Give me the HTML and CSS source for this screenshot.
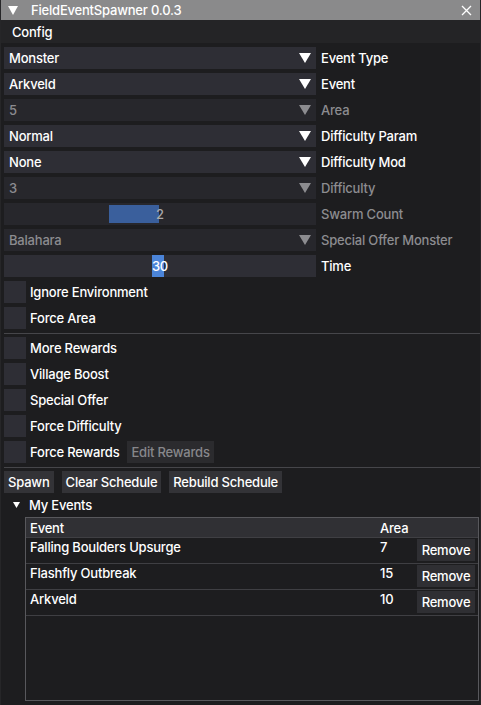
FILE: index.html
```html
<!DOCTYPE html>
<html lang="en">
<head>
  <meta charset="UTF-8">
  <title>FieldEventSpawner</title>
  <link rel="stylesheet" href="styles.css">
</head>
<body>
  <div class="window">
    <div class="titlebar">
      <svg class="collapse" width="10" height="9" viewBox="0 0 10 9"><path d="M0 0H10L5 9Z" fill="#fff"/></svg>
      <span class="title">FieldEventSpawner 0.0.3</span>
      <svg class="close" width="11" height="11" viewBox="0 0 11 11"><path d="M1 1L10 10M10 1L1 10" stroke="#fff" stroke-width="1.3"/></svg>
    </div>
    <div class="menubar"><span>Config</span></div>

    <div class="content">
      <div class="row">
        <div class="frame combo"><span>Monster</span><i class="arrow"></i></div>
        <span class="label">Event Type</span>
      </div>
      <div class="row">
        <div class="frame combo"><span>Arkveld</span><i class="arrow"></i></div>
        <span class="label">Event</span>
      </div>
      <div class="row disabled">
        <div class="frame combo"><span>5</span><i class="arrow"></i></div>
        <span class="label">Area</span>
      </div>
      <div class="row">
        <div class="frame combo"><span>Normal</span><i class="arrow"></i></div>
        <span class="label">Difficulty Param</span>
      </div>
      <div class="row">
        <div class="frame combo"><span>None</span><i class="arrow"></i></div>
        <span class="label">Difficulty Mod</span>
      </div>
      <div class="row disabled">
        <div class="frame combo"><span>3</span><i class="arrow"></i></div>
        <span class="label">Difficulty</span>
      </div>
      <div class="row disabled">
        <div class="frame slider">
          <div class="grab grab-wide"></div>
          <span class="value">2</span>
        </div>
        <span class="label">Swarm Count</span>
      </div>
      <div class="row disabled">
        <div class="frame combo"><span>Balahara</span><i class="arrow"></i></div>
        <span class="label">Special Offer Monster</span>
      </div>
      <div class="row">
        <div class="frame slider">
          <div class="grab grab-time"></div>
          <span class="value">30</span>
        </div>
        <span class="label">Time</span>
      </div>

      <div class="check"><div class="box"></div><span>Ignore Environment</span></div>
      <div class="check"><div class="box"></div><span>Force Area</span></div>

      <div class="separator"></div>

      <div class="check"><div class="box"></div><span>More Rewards</span></div>
      <div class="check"><div class="box"></div><span>Village Boost</span></div>
      <div class="check"><div class="box"></div><span>Special Offer</span></div>
      <div class="check"><div class="box"></div><span>Force Difficulty</span></div>
      <div class="check">
        <div class="box"></div><span>Force Rewards</span>
        <button class="btn btn-disabled">Edit Rewards</button>
      </div>

      <div class="separator"></div>

      <div class="buttons">
        <button class="btn">Spawn</button>
        <button class="btn">Clear Schedule</button>
        <button class="btn">Rebuild Schedule</button>
      </div>

      <div class="tree">
        <svg width="7" height="6" viewBox="0 0 7 6"><path d="M0 0H7L3.5 6Z" fill="#fff"/></svg>
        <span>My Events</span>
      </div>

      <div class="table">
        <div class="trow thead">
          <div class="cell">Event</div>
          <div class="cell">Area</div>
          <div class="cell"></div>
        </div>
        <div class="trow">
          <div class="cell">Falling Boulders Upsurge</div>
          <div class="cell">7</div>
          <div class="cell"><button class="btn remove">Remove</button></div>
        </div>
        <div class="trow">
          <div class="cell">Flashfly Outbreak</div>
          <div class="cell">15</div>
          <div class="cell"><button class="btn remove">Remove</button></div>
        </div>
        <div class="trow">
          <div class="cell">Arkveld</div>
          <div class="cell">10</div>
          <div class="cell"><button class="btn remove">Remove</button></div>
        </div>
      </div>
    </div>
  </div>
</body>
</html>
```

FILE: styles.css
```css
body {
  margin: 0;
  background-color: #1d1d1f;
  font-family: Inter, Roboto, "Noto Sans", sans-serif;
  font-size: 13px;
  font-weight: 500;
  letter-spacing: -0.2px;
  color: #ffffff;
}

.window {
  width: 481px;
  height: 705px;
  box-sizing: border-box;
  border-left: 1px solid #262628;
  border-right: 1px solid #262628;
  overflow: hidden;
}

/* Title bar */
.titlebar {
  height: 20px;
  background-color: #8a8a8b;
  display: flex;
  align-items: center;
  padding: 0 8px 0 7px;
}

.titlebar .title {
  margin-left: 13px;
  flex: 1;
}

.menubar {
  height: 23px;
  background-color: #242426;
  display: flex;
  align-items: center;
  padding-left: 11px;
}

/* Content */
.content {
  display: flex;
  flex-direction: column;
  gap: 4px;
  padding: 4px 0 0 3px;
}

.row {
  display: flex;
  align-items: center;
  height: 22px;
}

.frame {
  width: 312px;
  height: 22px;
  background-color: #2e2e35;
  box-sizing: border-box;
  position: relative;
  display: flex;
  align-items: center;
}

.combo {
  padding-left: 5px;
}

.combo span {
  flex: 1;
}

.arrow {
  width: 0;
  height: 0;
  border-left: 6px solid transparent;
  border-right: 6px solid transparent;
  border-top: 10px solid #ffffff;
  margin-right: 5px;
}

.label {
  margin-left: 5px;
}

.disabled .frame {
  background-color: #27272c;
}

.disabled span,
.disabled .label {
  color: #8c8c90;
}

.disabled .arrow {
  border-top-color: #8c8c90;
}

/* Sliders */
.slider {
  justify-content: center;
}

.grab {
  position: absolute;
  top: 2px;
  bottom: 2px;
  background-color: #4878c8;
}

.grab-wide {
  left: 105px;
  width: 50px;
  background-color: #3a5f9c;
}

.grab-time {
  left: 148px;
  width: 12px;
  top: 0;
  bottom: 0;
  background-color: #4b84d8;
}

.slider .value {
  position: relative;
}

.disabled .slider .value {
  color: #a8a8ac;
}

/* Checkboxes */
.check {
  display: flex;
  align-items: center;
  height: 22px;
}

.check .box {
  width: 22px;
  height: 22px;
  background-color: #2e2e35;
  margin-right: 4px;
}

.separator {
  height: 1px;
  background-color: #46464a;
  margin: 0 0 -1px 0;
}

/* Buttons */
.btn {
  font-family: inherit;
  font-size: 13px;
  font-weight: 500;
  letter-spacing: -0.2px;
  color: #ffffff;
  background-color: #333337;
  border: none;
  height: 22px;
  padding: 0 4px;
  margin: 0;
}

.btn-disabled {
  margin-left: 8px;
  background-color: #2b2b2e;
  color: #87878b;
}

.buttons {
  display: flex;
  gap: 8px;
  height: 22px;
}

.tree {
  display: flex;
  align-items: center;
  height: 16px;
  padding-left: 9px;
}

.tree span {
  margin-left: 9px;
}

/* Table */
.table {
  margin-left: 21px;
  margin-right: 1px;
  height: 184px;
  border: 1px solid #58585c;
  box-sizing: border-box;
}

.trow {
  display: grid;
  grid-template-columns: 350px 37px 1fr;
  height: 25px;
  border-bottom: 1px solid #3f3f43;
}

.thead {
  height: 19px;
  background-color: #303034;
  align-items: center;
}

.cell {
  padding-left: 4px;
}

.trow:not(.thead) .cell {
  padding-top: 1px;
}

.remove {
  width: 58px;
  height: 22px;
  background-color: #2f2f33;
}
```
